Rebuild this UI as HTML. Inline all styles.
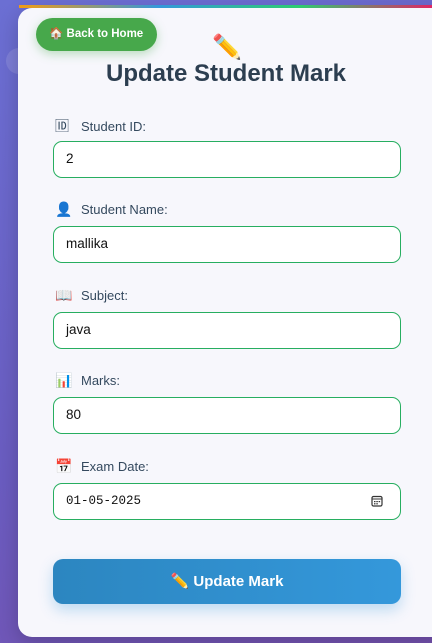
<!DOCTYPE html>
<html><head><meta charset="utf-8"><style>
*{box-sizing:border-box;margin:0;padding:0}
body{width:432px;height:643px;overflow:hidden;background:linear-gradient(160deg,#6b6fd3 0%,#6a5cc0 60%,#7552b0 100%);font-family:"Liberation Sans","Noto Sans CJK JP",sans-serif;position:relative}
.blob{position:absolute;left:6px;top:48px;width:26px;height:26px;border-radius:50%;background:rgba(255,255,255,.12)}
.card{position:absolute;left:18px;top:8px;width:430px;height:629px;background:#f7f7fc;border-radius:14px;overflow:hidden;box-shadow:0 6px 20px rgba(0,0,0,.2)}
.bar{position:absolute;left:19px;top:5px;width:420px;height:3px;background:linear-gradient(90deg,#f39c12,#3498db,#2ecc71,#e91e63)}
.back{position:absolute;left:36px;top:18px;width:121px;height:33px;border-radius:17px;background:#47a84b;color:#fff;font-size:11.5px;font-weight:bold;line-height:33px;padding-left:13px;box-shadow:0 3px 10px rgba(70,168,75,.35)}
.pen{position:absolute;left:212px;top:33px;font-size:24px}
h1{position:absolute;left:0;width:452px;top:60px;text-align:center;font-size:24px;color:#2c3e50;font-weight:bold}
.lab{position:absolute;left:55px;font-size:13px;color:#34495e;display:flex;align-items:center}
.lab span.i{width:26px;font-size:14px}
.in{position:absolute;left:53px;width:348px;height:37px;border:1.5px solid #27ae60;border-radius:9px;background:#fff;font-size:13.5px;color:#111;line-height:34px;padding-left:12px}
.mono{font-family:"Liberation Mono",monospace;font-size:12.5px}
.btn{position:absolute;left:53px;top:559px;width:348px;height:45px;border-radius:10px;background:linear-gradient(90deg,#2c86c0,#3498db);color:#fff;font-weight:bold;font-size:15px;text-align:center;line-height:45px;box-shadow:0 6px 14px rgba(52,152,219,.3)}
</style></head><body>
<div class="blob"></div>
<div class="card"></div>
<div class="bar"></div>
<div class="back">🏠 Back to Home</div>
<div class="pen">✏️</div>
<h1>Update Student Mark</h1>
<div class="lab" style="top:116px"><span class="i">🆔</span>Student ID:</div>
<div class="in" style="top:141px">2</div>
<div class="lab" style="top:201px"><span class="i">👤</span>Student Name:</div>
<div class="in" style="top:226px">mallika</div>
<div class="lab" style="top:287px"><span class="i">📖</span>Subject:</div>
<div class="in" style="top:312px">java</div>
<div class="lab" style="top:372px"><span class="i">📊</span>Marks:</div>
<div class="in" style="top:397px">80</div>
<div class="lab" style="top:458px"><span class="i">📅</span>Exam Date:</div>
<div class="in mono" style="top:483px">01-05-2025<svg style="position:absolute;right:17px;top:11px" width="12" height="12" viewBox="0 0 12 12"><rect x="1" y="1.5" width="10" height="9.5" rx="1.5" fill="none" stroke="#333" stroke-width="1.2"/><line x1="1" y1="4" x2="11" y2="4" stroke="#333"/><rect x="3" y="6" width="1.5" height="1.2" fill="#333"/><rect x="5.3" y="6" width="1.5" height="1.2" fill="#333"/><rect x="7.6" y="6" width="1.5" height="1.2" fill="#333"/><rect x="3" y="8.2" width="1.5" height="1.2" fill="#333"/><rect x="5.3" y="8.2" width="1.5" height="1.2" fill="#333"/></svg></div>
<div class="btn">✏️ Update Mark</div>
</body></html>
